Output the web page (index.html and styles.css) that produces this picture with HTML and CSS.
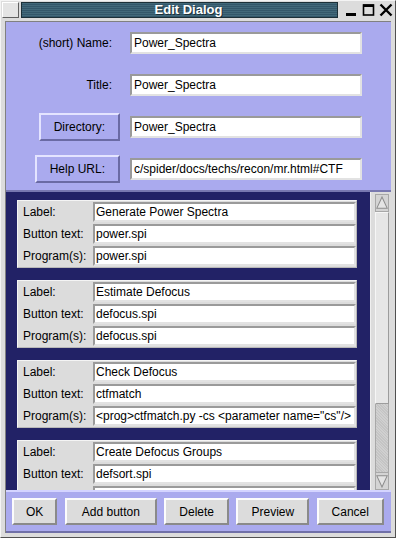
FILE: index.html
```html
<!DOCTYPE html>
<html>
<head>
<title>Edit Dialog</title>
<meta charset="utf-8">
<link rel="stylesheet" href="styles.css">
</head>
<body>
	<div class="window">
		<!-- window manager title bar -->
		<div class="titlebar">
			<div class="app-icon"></div>
			<div class="title">Edit Dialog</div>
			<div class="wm-buttons">
				<svg width="14" height="14" viewBox="0 0 14 14"><rect x="1" y="10" width="10" height="3" fill="#000"/></svg>
				<svg width="14" height="14" viewBox="0 0 14 14"><rect x="1.5" y="2" width="10" height="10" fill="none" stroke="#000" stroke-width="1.6"/><rect x="1" y="1.5" width="11" height="2.5" fill="#000"/></svg>
				<svg width="14" height="14" viewBox="0 0 14 14"><path d="M1.5 1.5 L12.5 12.5 M12.5 1.5 L1.5 12.5" stroke="#000" stroke-width="2.4"/></svg>
			</div>
		</div>

		<div class="client">
			<!-- general settings -->
			<div class="top">
				<div class="label">(short) Name:</div>
				<div class="field big">Power_Spectra</div>
				<div class="label">Title:</div>
				<div class="field big">Power_Spectra</div>
				<button class="lav-btn">Directory:</button>
				<div class="field big">Power_Spectra</div>
				<button class="lav-btn">Help URL:</button>
				<div class="field big">c/spider/docs/techs/recon/mr.html#CTF</div>
			</div>

			<!-- button list -->
			<div class="scroll">
				<div class="list">
					<div class="card">
						<div class="clabel">Label:</div><div class="field">Generate Power Spectra</div>
						<div class="clabel">Button text:</div><div class="field">power.spi</div>
						<div class="clabel">Program(s):</div><div class="field">power.spi</div>
					</div>
					<div class="card">
						<div class="clabel">Label:</div><div class="field">Estimate Defocus</div>
						<div class="clabel">Button text:</div><div class="field">defocus.spi</div>
						<div class="clabel">Program(s):</div><div class="field">defocus.spi</div>
					</div>
					<div class="card">
						<div class="clabel">Label:</div><div class="field">Check Defocus</div>
						<div class="clabel">Button text:</div><div class="field">ctfmatch</div>
						<div class="clabel">Program(s):</div><div class="field">&lt;prog&gt;ctfmatch.py -cs &lt;parameter name="cs"/&gt;</div>
					</div>
					<div class="card">
						<div class="clabel">Label:</div><div class="field">Create Defocus Groups</div>
						<div class="clabel">Button text:</div><div class="field">defsort.spi</div>
						<div class="clabel"></div><div class="field"></div>
					</div>
				</div>
				<div class="scrollbar">
					<div class="arrow">
						<svg width="14" height="16" viewBox="0 0 14 16"><polygon points="7,1 13,14 1,14" fill="#e4e4e4" stroke="#8c8c8c" stroke-width="1.2"/></svg>
					</div>
					<div class="thumb"></div>
					<div class="trough"></div>
					<div class="arrow">
						<svg width="14" height="16" viewBox="0 0 14 16"><polygon points="1,2 13,2 7,15" fill="#e4e4e4" stroke="#8c8c8c" stroke-width="1.2"/></svg>
					</div>
				</div>
			</div>

			<!-- dialog actions -->
			<div class="bottom">
				<button class="btn ok">OK</button>
				<button class="btn add">Add button</button>
				<button class="btn">Delete</button>
				<button class="btn">Preview</button>
				<button class="btn">Cancel</button>
			</div>
		</div>
	</div>
</body>
</html>
```

FILE: styles.css
```css
body {
	margin: 0;
	font-family: "Liberation Sans", Arial, sans-serif;
	font-size: 12px;
	color: #000;
}

.window {
	width: 396px;
	height: 538px;
	box-sizing: border-box;
	background: #dcdcdc;
	border-left: 1px solid #f4f4f4;
	border-top: 1px solid #f4f4f4;
	border-right: 1px solid #505050;
	border-bottom: 1px solid #505050;
	display: flex;
	flex-direction: column;
	overflow: hidden;
}

/* title bar */
.titlebar {
	display: flex;
	align-items: center;
	height: 16px;
	margin: 1px 2px 0 1px;
	gap: 2px;
}

.app-icon {
	width: 15px;
	height: 14px;
	background: #e4e4e4;
	border-top: 1px solid #fff;
	border-left: 1px solid #fff;
	border-right: 1px solid #606060;
	border-bottom: 1px solid #606060;
}

.title {
	flex: 1;
	height: 14px;
	line-height: 14px;
	padding-left: 18px;
	text-align: center;
	color: #fff;
	font-weight: bold;
	font-size: 13px;
	border: 1px solid #1c3038;
	background: repeating-linear-gradient(to bottom, #42697a 0, #42697a 1px, #33576a 1px, #33576a 2px);
	text-shadow: 1px 1px 0 #1c3038;
}

.wm-buttons {
	display: flex;
	gap: 3px;
	padding-left: 5px;
}

/* client area */
.client {
	flex: 1;
	min-height: 0;
	margin: 3px 4px 4px 4px;
	display: flex;
	flex-direction: column;
	border-top: 1px solid #808080;
	border-left: 1px solid #808080;
}

.top {
	flex-shrink: 0;
	background: #aaaaee;
	padding: 7px 0 7px 0;
	border-bottom: 2px solid #7878b0;
	display: grid;
	grid-template-columns: 114px 232px;
	grid-auto-rows: 28px;
	column-gap: 10px;
	row-gap: 14px;
	align-items: center;
}

.label {
	text-align: right;
	padding-right: 8px;
}

.lav-btn {
	justify-self: end;
	height: 28px;
	padding: 0 13px;
	font-family: inherit;
	font-size: 12px;
	background: #aaaaee;
	border: 2px solid;
	border-color: #e4e4ff #6a6aa4 #6a6aa4 #e4e4ff;
}

.field {
	box-sizing: border-box;
	height: 20px;
	line-height: 16px;
	padding: 0 1px;
	background: #fff;
	border: 2px solid;
	border-color: #9a9a9a #e2e2e2 #e2e2e2 #9a9a9a;
	white-space: nowrap;
	overflow: hidden;
}

.field.big {
	height: 22px;
	line-height: 18px;
	padding: 0 2px;
}

/* scrolled list of buttons */
.scroll {
	flex: 1;
	min-height: 0;
	display: flex;
	background: #222266;
}

.list {
	flex: 1;
	padding: 8px 13px 0 11px;
	display: flex;
	flex-direction: column;
	gap: 12px;
	overflow: hidden;
}

.card {
	flex-shrink: 0;
	display: grid;
	grid-template-columns: 74px 1fr;
	row-gap: 2px;
	padding: 1px 0 1px 1px;
	background: #dcdcdc;
	border: 1px solid;
	border-color: #f4f4f4 #b8b8b8 #b8b8b8 #f4f4f4;
}

.clabel {
	line-height: 20px;
	padding-left: 4px;
}

.scrollbar {
	width: 21px;
	box-sizing: border-box;
	padding: 2px 2px 0 4px;
	background: #dcdcdc;
	border-left: 1px solid #efefef;
	display: flex;
	flex-direction: column;
}

.arrow {
	height: 16px;
	display: flex;
	justify-content: center;
	border: 1px solid #a8a8a8;
	background: #d4d4d4;
}

.thumb {
	height: 190px;
	background: #e6e6e6;
	border: 1px solid;
	border-color: #f6f6f6 #9c9c9c #9c9c9c #f6f6f6;
}

.trough {
	flex: 1;
	background: repeating-linear-gradient(45deg, #c4c4c4 0, #c4c4c4 1px, #d0d0d0 1px, #d0d0d0 2px);
	border-left: 1px solid #a8a8a8;
	border-right: 1px solid #a8a8a8;
}

/* action buttons */
.bottom {
	flex-shrink: 0;
	background: #aaaaee;
	height: 43px;
	box-sizing: border-box;
	border-top: 2px solid #d4d4ff;
	border-bottom: 2px solid #7070a8;
	padding: 0 7px 0 6px;
	display: flex;
	align-items: center;
	justify-content: space-between;
}

.btn {
	height: 27px;
	padding: 0 13px;
	font-family: inherit;
	font-size: 12px;
	background: #dcdcdc;
	border: 2px solid;
	border-color: #fcfcfc #8a8a8a #8a8a8a #fcfcfc;
}

.btn.ok {
	padding: 0 12px;
}

.btn.add {
	padding: 0 15px;
}
```
